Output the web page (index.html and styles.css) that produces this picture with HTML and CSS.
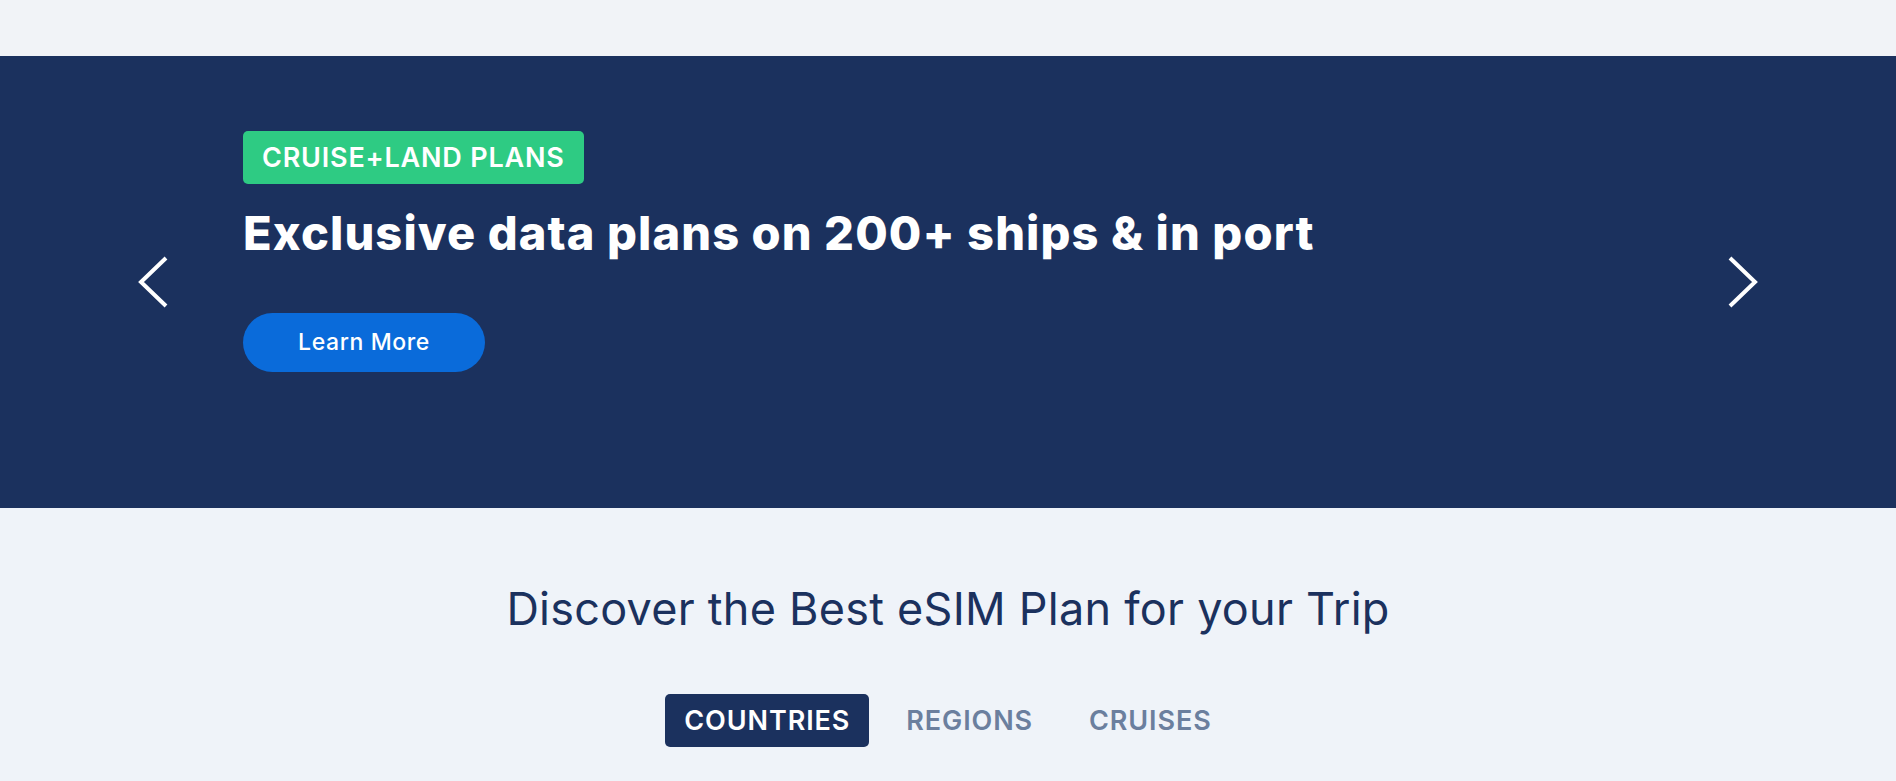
FILE: index.html
```html
<!DOCTYPE html>
<html lang="en">
<head>
  <meta charset="UTF-8" />
  <meta name="viewport" content="width=device-width, initial-scale=1.0"/>
  <title>eSIM Plans</title>
  <link rel="stylesheet" href="styles.css">
</head>
<body>

  <div class="topbar"></div>

  <section class="hero">
    <button class="hero-arrow" aria-label="Previous">
      <svg width="30" height="52" viewBox="0 0 30 52"><polyline points="28,2 3,26 28,50" fill="none" stroke="#fff" stroke-width="4"/></svg>
    </button>

    <div class="hero-content">
      <span class="hero-badge">CRUISE+LAND PLANS</span>
      <h1 class="hero-title">Exclusive data plans on 200+ ships &amp; in port</h1>
      <a class="hero-btn" href="#">Learn More</a>
    </div>

    <button class="hero-arrow" aria-label="Next">
      <svg width="30" height="52" viewBox="0 0 30 52"><polyline points="2,2 27,26 2,50" fill="none" stroke="#fff" stroke-width="4"/></svg>
    </button>
  </section>

  <section class="discover">
    <h2 class="discover-title">Discover the Best eSIM Plan for your Trip</h2>
    <div class="tabs">
      <button class="tab active">COUNTRIES</button>
      <button class="tab">REGIONS</button>
      <button class="tab">CRUISES</button>
    </div>
  </section>

</body>
</html>
```

FILE: styles.css
```css
body {
  font-family: Inter, "Open Sans", sans-serif;
  background-color: #eff3f9;
  margin: 0;
  padding: 0;
  overflow: hidden;
}

.topbar {
  height: 56px;
  background-color: #f1f3f7;
}

.hero {
  background-color: #1b315e;
  height: 452px;
  padding: 0 138px;
  display: flex;
  align-items: center;
}

.hero-arrow {
  background: none;
  border: none;
  padding: 0;
  width: 30px;
  height: 52px;
  cursor: pointer;
  flex-shrink: 0;
}

.hero-arrow svg {
  display: block;
}

.hero-content {
  flex: 1;
  align-self: flex-start;
  margin-left: 75px;
  padding-top: 75px;
  display: flex;
  flex-direction: column;
  align-items: flex-start;
}

.hero-badge {
  background-color: #2ecb83;
  color: white;
  font-weight: 600;
  font-size: 27px;
  letter-spacing: 0.8px;
  height: 53px;
  line-height: 53px;
  padding: 0 19px;
  border-radius: 5px;
}

.hero-title {
  color: white;
  font-size: 47px;
  font-weight: 800;
  line-height: 56px;
  margin: 21px 0 0;
  letter-spacing: 1.1px;
}

.hero-btn {
  margin-top: 52px;
  background-color: #0a6bda;
  color: white;
  text-decoration: none;
  font-size: 23px;
  font-weight: 500;
  letter-spacing: 0.6px;
  height: 59px;
  line-height: 59px;
  width: 242px;
  text-align: center;
  border-radius: 30px;
}

.discover {
  padding-top: 75px;
  text-align: center;
}

.discover-title {
  color: #1b315e;
  font-size: 45px;
  font-weight: 400;
  line-height: 52px;
  margin: 0;
  letter-spacing: 0.25px;
}

.tabs {
  margin-top: 59px;
  display: flex;
  justify-content: center;
  gap: 18px;
}

.tab {
  font-family: inherit;
  font-size: 27px;
  font-weight: 600;
  letter-spacing: 0.9px;
  height: 53px;
  line-height: 53px;
  padding: 0 19px;
  border: none;
  border-radius: 5px;
  background: none;
  color: #6b7f9e;
  cursor: pointer;
}

.tab.active {
  background-color: #1b315e;
  color: white;
}
```
